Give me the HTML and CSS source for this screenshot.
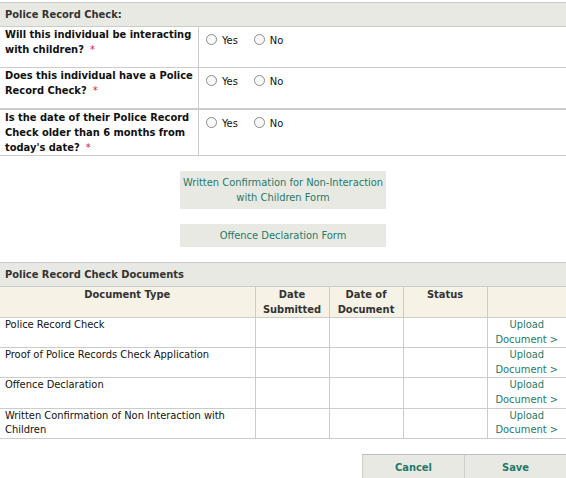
FILE: index.html
```html
<!DOCTYPE html>
<html>
<head>
<meta charset="utf-8">
<link rel="stylesheet" href="styles.css">
</head>
<body>
<div class="page">
  <div class="section-head">Police Record Check:</div>
  <table class="qtable">
    <tr>
      <td class="q">Will this individual be interacting with children?<span class="req">*</span></td>
      <td class="a"><span class="radio"></span><span class="lbl">Yes</span><span class="radio"></span><span class="lbl">No</span></td>
    </tr>
    <tr>
      <td class="q">Does this individual have a Police Record Check?<span class="req">*</span></td>
      <td class="a"><span class="radio"></span><span class="lbl">Yes</span><span class="radio"></span><span class="lbl">No</span></td>
    </tr>
    <tr class="thick">
      <td class="q">Is the date of their Police Record Check older than 6 months from today's date?<span class="req">*</span></td>
      <td class="a"><span class="radio"></span><span class="lbl">Yes</span><span class="radio"></span><span class="lbl">No</span></td>
    </tr>
  </table>

  <div class="forms">
    <div class="form-btn">Written Confirmation for Non-Interaction<br>with Children Form</div>
    <div class="form-btn">Offence Declaration Form</div>
  </div>

  <div class="section-head docs-head">Police Record Check Documents</div>
  <table class="dtable">
    <colgroup>
      <col class="c1"><col class="c2"><col class="c3"><col class="c4"><col class="c5">
    </colgroup>
    <tr class="hrow">
      <th>Document Type</th>
      <th>Date<br>Submitted</th>
      <th>Date of<br>Document</th>
      <th>Status</th>
      <th></th>
    </tr>
    <tr>
      <td>Police Record Check</td><td></td><td></td><td></td>
      <td class="up">Upload<br>Document &gt;</td>
    </tr>
    <tr>
      <td>Proof of Police Records Check Application</td><td></td><td></td><td></td>
      <td class="up">Upload<br>Document &gt;</td>
    </tr>
    <tr>
      <td>Offence Declaration</td><td></td><td></td><td></td>
      <td class="up">Upload<br>Document &gt;</td>
    </tr>
    <tr>
      <td>Written Confirmation of Non Interaction with Children</td><td></td><td></td><td></td>
      <td class="up">Upload<br>Document &gt;</td>
    </tr>
  </table>

  <div class="actions">
    <div class="act">Cancel</div>
    <div class="act">Save</div>
  </div>
</div>
</body>
</html>
```

FILE: styles.css
```css
html, body {
  margin: 0;
  padding: 0;
  background: #ffffff;
}
body {
  font-family: "DejaVu Sans Condensed", "DejaVu Sans", sans-serif;
  font-size: 11px;
  line-height: 15px;
  color: #111;
}
.page {
  width: 566px;
  padding-top: 2px;
}
.section-head {
  background: #e9e9e4;
  border-top: 1px solid #c9c9c9;
  border-bottom: 1px solid #cccccc;
  height: 23px;
  line-height: 23px;
  padding-left: 5px;
  font-weight: bold;
  color: #333333;
}
.qtable {
  width: 100%;
  border-collapse: collapse;
}
.qtable td {
  border-bottom: 1px solid #cccccc;
  vertical-align: top;
  padding: 0;
  height: 40px;
}
.qtable tr.thick td {
  border-top: 2px solid #cccccc;
}
.qtable td.q {
  width: 193px;
  padding-left: 5px;
  border-right: 1px solid #cccccc;
  font-weight: bold;
}
.qtable td.a {
  padding-top: 6px;
  padding-left: 7px;
  height: 34px;
}
.req {
  display: inline-block;
  margin-left: 6px;
  color: #c8244a;
  font-weight: normal;
}
.radio {
  display: inline-block;
  width: 9px;
  height: 9px;
  border: 1px solid #8a8a8a;
  border-radius: 50%;
  background: #fafafa;
  vertical-align: -1px;
  margin-right: 5px;
}
.lbl {
  margin-right: 16px;
}
.forms {
  display: flex;
  flex-direction: column;
  align-items: center;
  gap: 15px;
  padding: 15px 0 15px;
}
.form-btn {
  width: 206px;
  background: #e9e9e4;
  color: #1f7a68;
  text-align: center;
  padding: 4px 0;
}
.dtable {
  width: 100%;
  border-collapse: collapse;
  table-layout: fixed;
}
.dtable col.c1 { width: 255px; }
.dtable col.c2 { width: 74px; }
.dtable col.c3 { width: 74px; }
.dtable col.c4 { width: 84px; }
.dtable col.c5 { width: 79px; }
.dtable th, .dtable td {
  padding: 0;
  vertical-align: top;
  border: 1px solid #cccccc;
  height: 29px;
  line-height: 14.6px;
}
.dtable tr > :first-child { border-left: none; }
.dtable tr > :last-child { border-right: none; }
.dtable tr.hrow th {
  border-top: none;
  background: #f6f2e6;
  font-weight: bold;
  color: #333333;
  text-align: center;
  line-height: 15px;
}
.dtable td:first-child {
  padding-left: 5px;
}
.dtable td.up {
  text-align: center;
  color: #1f7a68;
}
.actions {
  display: flex;
  justify-content: flex-end;
  margin-top: 15px;
}
.act {
  width: 101px;
  height: 25px;
  line-height: 25px;
  background: #e9e9e4;
  border-top: 1px solid #bdbdbd;
  border-left: 1px solid #cccccc;
  text-align: center;
  font-weight: bold;
  color: #1f7a68;
}
```
